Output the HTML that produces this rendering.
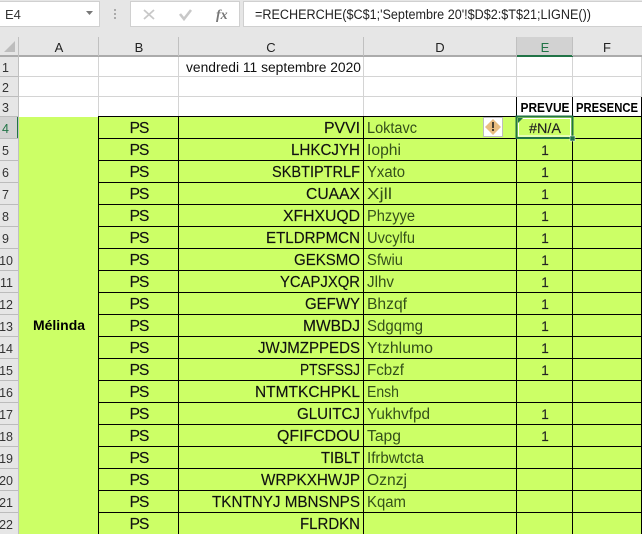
<!DOCTYPE html>
<html><head><meta charset="utf-8"><style>
html,body{margin:0;padding:0;background:#e6e6e6;width:642px;height:534px;overflow:hidden}
svg{display:block}
text{font-family:"Liberation Sans",sans-serif}
.h{font-size:13px;fill:#222;text-anchor:middle}
.n{font-size:12.5px;fill:#333;text-anchor:end}
.b{font-size:15.5px;fill:#111;text-anchor:middle;letter-spacing:-1px;stroke:#111;stroke-width:.15px}
.c{font-size:15.5px;fill:#111;text-anchor:end;stroke:#111;stroke-width:.15px}
.d{font-size:15.5px;fill:#34501a}
.e{font-size:13.5px;fill:#222;text-anchor:middle;stroke:#222;stroke-width:.15px}
.t{font-size:12.5px;font-weight:bold;fill:#000;text-anchor:middle}
</style></head><body>
<svg width="642" height="534" viewBox="0 0 642 534" xmlns="http://www.w3.org/2000/svg">
<rect width="642" height="534" fill="#e6e6e6"/>
<!-- formula bar -->
<rect x="-1" y="1.500" width="100.500" height="25" fill="#fff" stroke="#d0d0d0"/>
<text x="5" y="19" font-size="13" fill="#333">E4</text>
<path d="M86 11h7l-3.500 4z" fill="#777"/>
<g fill="#aaa"><rect x="114" y="9" width="2" height="2"/><rect x="114" y="13" width="2" height="2"/><rect x="114" y="17" width="2" height="2"/></g>
<rect x="130.500" y="1.500" width="109" height="25" fill="#fff" stroke="#d0d0d0"/>
<path d="M144 10l10 9M154 10l-10 9" stroke="#c8c8c8" stroke-width="1.800" fill="none"/>
<path d="M180 14l4 5 7-9" stroke="#c8c8c8" stroke-width="2.600" fill="none"/>
<text x="216" y="19" font-size="14" font-style="italic" font-weight="bold" fill="#777" style="font-family:'Liberation Serif',serif">fx</text>
<rect x="243.500" y="1.500" width="400" height="25" fill="#fff" stroke="#d0d0d0"/>
<text x="255" y="19" font-size="13.500" fill="#222" textLength="336" lengthAdjust="spacingAndGlyphs">=RECHERCHE($C$1;'Septembre 20'!$D$2:$T$21;LIGNE())</text>
<!-- grid base -->
<rect x="19" y="57" width="623" height="477" fill="#fff"/>
<rect x="0" y="55" width="642" height="2" fill="#ababab"/>
<rect x="517" y="37" width="56" height="18" fill="#d2d2d2"/>
<rect x="517" y="55" width="56" height="2" fill="#217346"/>
<rect x="0" y="116" width="18" height="22" fill="#d2d2d2"/>
<rect x="17" y="116" width="2" height="22" fill="#217346"/>
<path d="M4 52L15 41V52z" fill="#bdbdbd"/>
<path d="M18.500 37V534M98.500 37V56M178.500 37V56M363.500 37V56M516.500 37V56M572.500 37V56" stroke="#c0c0c0"/>
<path d="M98.500 57V116M178.500 57V116M363.500 57V116M19 76.500H642M19 96.500H642M516.500 57V96M572.500 57V96M641.500 57V96" stroke="#d4d4d4"/>
<path d="M0 76.500H18M0 96.500H18M0 116.500H18M0 138.500H18M0 160.500H18M0 182.500H18M0 204.500H18M0 226.500H18M0 248.500H18M0 270.500H18M0 292.500H18M0 314.500H18M0 336.500H18M0 358.500H18M0 380.500H18M0 402.500H18M0 424.500H18M0 446.500H18M0 468.500H18M0 490.500H18M0 512.500H18" stroke="#bcbcbc"/>
<!-- green -->
<rect x="19" y="117" width="623" height="417" fill="#ccff66"/>
<!-- black lines -->
<path d="M98.500 116V534M178.500 116V534M363.500 116V534M516.500 97V534M572.500 97V534M641.500 97V534M98 116.500H642M99 138.500H642M99 160.500H642M99 182.500H642M99 204.500H642M99 226.500H642M99 248.500H642M99 270.500H642M99 292.500H642M99 314.500H642M99 336.500H642M99 358.500H642M99 380.500H642M99 402.500H642M99 424.500H642M99 446.500H642M99 468.500H642M99 490.500H642M99 512.500H642" stroke="#000" fill="none"/>
<!-- headers -->
<text class="h" x="59" y="52">A</text><text class="h" x="139" y="52">B</text><text class="h" x="271" y="52">C</text><text class="h" x="440" y="52">D</text><text class="h" x="545" y="52" style="fill:#217346">E</text><text class="h" x="607" y="52">F</text>
<text class="n" x="9" y="72">1</text><text class="n" x="9" y="92">2</text><text class="n" x="9" y="112">3</text><text class="n" x="9" y="133" style="fill:#217346">4</text>
<text class="n" x="9" y="155">5</text><text class="n" x="9" y="177">6</text><text class="n" x="9" y="199">7</text><text class="n" x="9" y="221">8</text><text class="n" x="9" y="243">9</text>
<text class="n" x="13" y="265">10</text><text class="n" x="13" y="287">11</text><text class="n" x="13" y="309">12</text><text class="n" x="13" y="331">13</text><text class="n" x="13" y="353">14</text><text class="n" x="13" y="375">15</text><text class="n" x="13" y="397">16</text><text class="n" x="13" y="419">17</text><text class="n" x="13" y="441">18</text><text class="n" x="13" y="463">19</text><text class="n" x="13" y="485">20</text><text class="n" x="13" y="507">21</text><text class="n" x="13" y="529">22</text>
<!-- top text -->
<text x="186" y="72" font-size="13.500" fill="#111" textLength="175" lengthAdjust="spacingAndGlyphs">vendredi 11 septembre 2020</text>
<text class="t" x="545" y="112" textLength="49" lengthAdjust="spacingAndGlyphs">PREVUE</text>
<text class="t" x="607" y="112" textLength="62" lengthAdjust="spacingAndGlyphs">PRESENCE</text>
<text x="59" y="330" font-size="13.500" font-weight="bold" fill="#000" text-anchor="middle" textLength="52" lengthAdjust="spacingAndGlyphs">Mélinda</text>
<!-- col B -->
<text class="b" x="139" y="133">PS</text><text class="b" x="139" y="155">PS</text><text class="b" x="139" y="177">PS</text><text class="b" x="139" y="199">PS</text><text class="b" x="139" y="221">PS</text><text class="b" x="139" y="243">PS</text><text class="b" x="139" y="265">PS</text><text class="b" x="139" y="287">PS</text><text class="b" x="139" y="309">PS</text><text class="b" x="139" y="331">PS</text><text class="b" x="139" y="353">PS</text><text class="b" x="139" y="375">PS</text><text class="b" x="139" y="397">PS</text><text class="b" x="139" y="419">PS</text><text class="b" x="139" y="441">PS</text><text class="b" x="139" y="463">PS</text><text class="b" x="139" y="485">PS</text><text class="b" x="139" y="507">PS</text><text class="b" x="139" y="529">PS</text>
<!-- col C -->
<text class="c" x="360" y="133" textLength="36" lengthAdjust="spacingAndGlyphs">PVVI</text>
<text class="c" x="360" y="155" textLength="69" lengthAdjust="spacingAndGlyphs">LHKCJYH</text>
<text class="c" x="360" y="177" textLength="88" lengthAdjust="spacingAndGlyphs">SKBTIPTRLF</text>
<text class="c" x="360" y="199" textLength="54" lengthAdjust="spacingAndGlyphs">CUAAX</text>
<text class="c" x="360" y="221" textLength="77" lengthAdjust="spacingAndGlyphs">XFHXUQD</text>
<text class="c" x="360" y="243" textLength="94" lengthAdjust="spacingAndGlyphs">ETLDRPMCN</text>
<text class="c" x="360" y="265" textLength="66" lengthAdjust="spacingAndGlyphs">GEKSMO</text>
<text class="c" x="360" y="287" textLength="80" lengthAdjust="spacingAndGlyphs">YCAPJXQR</text>
<text class="c" x="360" y="309" textLength="55" lengthAdjust="spacingAndGlyphs">GEFWY</text>
<text class="c" x="360" y="331" textLength="57" lengthAdjust="spacingAndGlyphs">MWBDJ</text>
<text class="c" x="360" y="353" textLength="102" lengthAdjust="spacingAndGlyphs">JWJMZPPEDS</text>
<text class="c" x="360" y="375" textLength="60" lengthAdjust="spacingAndGlyphs">PTSFSSJ</text>
<text class="c" x="360" y="397" textLength="105" lengthAdjust="spacingAndGlyphs">NTMTKCHPKL</text>
<text class="c" x="360" y="419" textLength="63" lengthAdjust="spacingAndGlyphs">GLUITCJ</text>
<text class="c" x="360" y="441" textLength="83" lengthAdjust="spacingAndGlyphs">QFIFCDOU</text>
<text class="c" x="360" y="463" textLength="39" lengthAdjust="spacingAndGlyphs">TIBLT</text>
<text class="c" x="360" y="485" textLength="99" lengthAdjust="spacingAndGlyphs">WRPKXHWJP</text>
<text class="c" x="360" y="507" textLength="148" lengthAdjust="spacingAndGlyphs">TKNTNYJ MBNSNPS</text>
<text class="c" x="360" y="529" textLength="60" lengthAdjust="spacingAndGlyphs">FLRDKN</text>
<!-- col D -->
<text class="d" x="367" y="133" textLength="50" lengthAdjust="spacingAndGlyphs">Loktavc</text>
<text class="d" x="367" y="155" textLength="34" lengthAdjust="spacingAndGlyphs">Iophi</text>
<text class="d" x="367" y="177" textLength="38" lengthAdjust="spacingAndGlyphs">Yxato</text>
<text class="d" x="367" y="199" textLength="25" lengthAdjust="spacingAndGlyphs">Xjll</text>
<text class="d" x="367" y="221" textLength="48" lengthAdjust="spacingAndGlyphs">Phzyye</text>
<text class="d" x="367" y="243" textLength="48" lengthAdjust="spacingAndGlyphs">Uvcylfu</text>
<text class="d" x="367" y="265" textLength="36" lengthAdjust="spacingAndGlyphs">Sfwiu</text>
<text class="d" x="367" y="287" textLength="27" lengthAdjust="spacingAndGlyphs">Jlhv</text>
<text class="d" x="367" y="309" textLength="40" lengthAdjust="spacingAndGlyphs">Bhzqf</text>
<text class="d" x="367" y="331" textLength="56" lengthAdjust="spacingAndGlyphs">Sdgqmg</text>
<text class="d" x="367" y="353" textLength="66" lengthAdjust="spacingAndGlyphs">Ytzhlumo</text>
<text class="d" x="367" y="375" textLength="37" lengthAdjust="spacingAndGlyphs">Fcbzf</text>
<text class="d" x="367" y="397" textLength="32" lengthAdjust="spacingAndGlyphs">Ensh</text>
<text class="d" x="367" y="419" textLength="63" lengthAdjust="spacingAndGlyphs">Yukhvfpd</text>
<text class="d" x="367" y="441" textLength="34" lengthAdjust="spacingAndGlyphs">Tapg</text>
<text class="d" x="367" y="463" textLength="57" lengthAdjust="spacingAndGlyphs">Ifrbwtcta</text>
<text class="d" x="367" y="485" textLength="40" lengthAdjust="spacingAndGlyphs">Oznzj</text>
<text class="d" x="367" y="507" textLength="39" lengthAdjust="spacingAndGlyphs">Kqam</text>
<!-- col E -->
<text class="e" x="545" y="133" textLength="32" lengthAdjust="spacingAndGlyphs">#N/A</text>
<text class="e" x="545" y="155">1</text><text class="e" x="545" y="177">1</text><text class="e" x="545" y="199">1</text><text class="e" x="545" y="221">1</text><text class="e" x="545" y="243">1</text><text class="e" x="545" y="265">1</text><text class="e" x="545" y="287">1</text><text class="e" x="545" y="309">1</text><text class="e" x="545" y="331">1</text><text class="e" x="545" y="353">1</text><text class="e" x="545" y="375">1</text><text class="e" x="545" y="419">1</text><text class="e" x="545" y="441">1</text>
<!-- selection -->
<rect x="516.500" y="116.500" width="56" height="21.500" fill="none" stroke="#217346" stroke-width="2"/>
<rect x="518.500" y="118.500" width="52" height="17.500" fill="none" stroke="#fff" stroke-width="1"/>
<path d="M518 118h5l-5 5z" fill="#217346"/>
<rect x="570" y="136" width="5" height="5" fill="#217346" stroke="#fff" stroke-width="0.500"/>
<!-- warning icon -->
<rect x="483.500" y="117.500" width="19" height="19" fill="#fff" stroke="#bdbdbd"/>
<path d="M493 119l8 8-8 8-8-8z" fill="#e9bd80"/>
<rect x="492" y="122" width="2" height="6" fill="#4a4030"/><rect x="492" y="129" width="2" height="2" fill="#4a4030"/>
</svg>
</body></html>
